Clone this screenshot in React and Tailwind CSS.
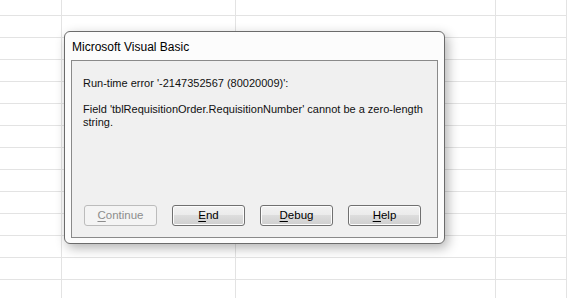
import React from "react";

const cols = ["w-[62px]", "w-[174px]", "w-[260px]", "flex-1"];

const Btn = ({ label, hot, disabled }) => (
  <button
    disabled={disabled}
    className={
      disabled
        ? "w-[73px] h-[21px] rounded-[3px] border border-[#bcbcbc] bg-[#f4f4f4] text-[#8d8d8d] text-[11.5px] leading-none"
        : "w-[73px] h-[21px] rounded-[3px] border border-[#707070] bg-[linear-gradient(#f2f2f2_0%,#ebebeb_50%,#dddddd_50%,#cfcfcf_100%)] shadow-[inset_0_0_0_1px_#fcfcfc] text-black text-[11.5px] leading-none"
    }
  >
    <span className="underline underline-offset-2">{hot}</span>
    {label.slice(1)}
  </button>
);

export default function App() {
  return (
    <div className="relative w-[567px] h-[298px] overflow-hidden bg-white font-['Liberation_Sans',sans-serif]">
      {/* sheet grid behind the dialog */}
      <div className="flex flex-col">
        <div className="flex h-[16px] border-b border-[#e3e3e3]">
          {cols.map((c, i) => (
            <div key={i} className={`${c} border-r border-[#e3e3e3]`} />
          ))}
        </div>
        {Array.from({ length: 13 }).map((_, r) => (
          <div key={r} className="flex h-[22px] border-b border-[#e3e3e3]">
            {cols.map((c, i) => (
              <div key={i} className={`${c} border-r border-[#e3e3e3]`} />
            ))}
          </div>
        ))}
      </div>

      {/* error dialog */}
      <div className="absolute left-[64px] top-[31px] w-[381px] h-[213px] rounded-[6px] border border-[#6b6b6b] bg-[#fcfcfc] shadow-[3px_4px_12px_rgba(0,0,0,0.3)] flex flex-col px-[6px] pb-[5px]">
        <div className="h-[28px] flex items-center pl-[1px] pt-[2px] text-[12px] text-black">
          Microsoft Visual Basic
        </div>
        <div className="flex-1 border border-[#8a8a8a] bg-[#f0f0f0] flex flex-col px-[11px] pt-[16px] pb-[11px] text-[11px] text-[#111] leading-[13px]">
          <p>Run-time error '-2147352567 (80020009)':</p>
          <p className="mt-[13px]">
            Field 'tblRequisitionOrder.RequisitionNumber' cannot be a zero-length string.
          </p>
          <div className="mt-auto flex gap-[15px] pl-[1px]">
            <Btn label="Continue" hot="C" disabled />
            <Btn label="End" hot="E" />
            <Btn label="Debug" hot="D" />
            <Btn label="Help" hot="H" />
          </div>
        </div>
      </div>
    </div>
  );
}
